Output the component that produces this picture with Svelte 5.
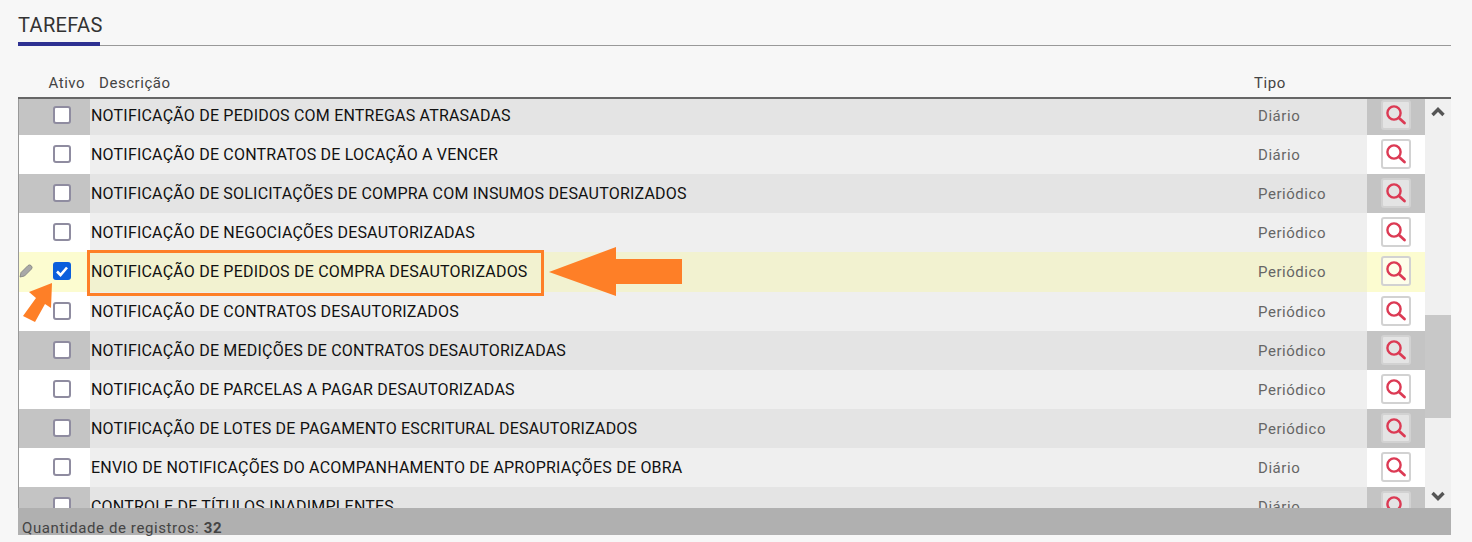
<script>
	const rows = [
		['NOTIFICAÇÃO DE PEDIDOS COM ENTREGAS ATRASADAS', 'Diário', false],
		['NOTIFICAÇÃO DE CONTRATOS DE LOCAÇÃO A VENCER', 'Diário', false],
		['NOTIFICAÇÃO DE SOLICITAÇÕES DE COMPRA COM INSUMOS DESAUTORIZADOS', 'Periódico', false],
		['NOTIFICAÇÃO DE NEGOCIAÇÕES DESAUTORIZADAS', 'Periódico', false],
		['NOTIFICAÇÃO DE PEDIDOS DE COMPRA DESAUTORIZADOS', 'Periódico', true],
		['NOTIFICAÇÃO DE CONTRATOS DESAUTORIZADOS', 'Periódico', false],
		['NOTIFICAÇÃO DE MEDIÇÕES DE CONTRATOS DESAUTORIZADAS', 'Periódico', false],
		['NOTIFICAÇÃO DE PARCELAS A PAGAR DESAUTORIZADAS', 'Periódico', false],
		['NOTIFICAÇÃO DE LOTES DE PAGAMENTO ESCRITURAL DESAUTORIZADOS', 'Periódico', false],
		['ENVIO DE NOTIFICAÇÕES DO ACOMPANHAMENTO DE APROPRIAÇÕES DE OBRA', 'Diário', false],
		['CONTROLE DE TÍTULOS INADIMPLENTES', 'Diário', false]
	];
</script>

<div class="page">
	<h2 class="title"><span>TAREFAS</span></h2>

	<div class="head">
		<span class="h-ativo">Ativo</span>
		<span class="h-desc">Descrição</span>
		<span class="h-tipo">Tipo</span>
	</div>

	<div class="grid">
		<div class="viewport">
			<div class="list">
				{#each rows as [desc, tipo, checked], i}
					<div class="row" class:alt={i % 2 === 0} class:sel={checked}>
						<div class="c-check">
							{#if checked}
								<svg class="pencil" viewBox="0 0 14 14" width="14" height="14">
									<path d="M1 13 L2 8.5 L9 1.5 Q10.5 .3 12 1.5 L12.5 2 Q13.7 3.5 12.5 5 L5.5 12 Z" fill="#a8a8a8" stroke="#7c7c7c" stroke-width=".8"/>
								</svg>
							{/if}
							<span class="box" class:on={checked}>
								{#if checked}
									<svg viewBox="0 0 18 18" width="18" height="18">
										<path d="M4 9.5 L7.5 13 L14 5.5" fill="none" stroke="#fff" stroke-width="2.6"/>
									</svg>
								{/if}
							</span>
						</div>
						<div class="c-desc">{desc}</div>
						<div class="c-tipo">{tipo}</div>
						<div class="c-act">
							<span class="btn">
								<svg viewBox="0 0 24 24" width="24" height="24">
									<circle cx="10" cy="10" r="6.6" fill="none" stroke="#dc3a54" stroke-width="2.4"/>
									<path d="M15 15 L20.5 20" stroke="#dc3a54" stroke-width="2.8" stroke-linecap="round"/>
								</svg>
							</span>
						</div>
					</div>
				{/each}
			</div>
			<div class="scroll">
				<svg class="chev up" viewBox="0 0 14 10" width="14" height="10"><path d="M1.5 8 L7 2.5 L12.5 8" fill="none" stroke="#555" stroke-width="3.4"/></svg>
				<div class="thumb"></div>
				<svg class="chev down" viewBox="0 0 14 10" width="14" height="10"><path d="M1.5 2 L7 7.5 L12.5 2" fill="none" stroke="#555" stroke-width="3.4"/></svg>
			</div>
		</div>
		<div class="foot">Quantidade de registros: <b>32</b></div>
	</div>

	<div class="mark"></div>
	<svg class="arrows" width="1472" height="542" viewBox="0 0 1472 542">
		<polygon points="549,272 616,247 616,259 682,259 682,284 616,284 616,296" fill="#fe7f27"/>
		<polygon points="52,283 29,292 36,298 23,316 35,322 45,304 51,308" fill="#fe7f27"/>
	</svg>
</div>

<style>
	:global(body) {
		background: #f7f7f7;
	}

	.page {
		position: relative;
		width: 1472px;
		height: 542px;
		overflow: hidden;
		box-sizing: border-box;
		padding: 0 21px 0 18px;
		font-family: Roboto, sans-serif;
		color: #222;
	}

	.title {
		margin: 0;
		height: 46px;
		border-bottom: 1px solid #999;
		box-sizing: border-box;
		font-size: 20px;
		font-weight: 400;
		line-height: 21px;
		padding-top: 15px;
		color: #333;
		letter-spacing: .35px;
	}

	.title span {
		display: block;
		width: 82px;
		height: 31px;
		box-sizing: border-box;
		border-bottom: 4px solid #2e3192;
		white-space: nowrap;
	}

	.head {
		display: grid;
		grid-template-columns: 81px 1155px 1fr;
		height: 51px;
		padding-top: 28px;
		box-sizing: border-box;
		font-size: 15px;
		line-height: 18px;
		letter-spacing: .55px;
		color: #444;
	}

	.h-ativo {
		padding-left: 30.5px;
		white-space: nowrap;
	}

	.grid {
		border-top: 2px solid #666;
	}

	.viewport {
		display: flex;
		height: 409px;
		overflow: hidden;
		border-left: 1px solid #999;
	}

	.list {
		flex: 1;
		margin-top: -3px;
	}

	.row {
		display: grid;
		grid-template-columns: 71px 1fr 113px 58px;
		height: 39px;
		background: #fff;
	}

	.row .c-desc,
	.row .c-tipo {
		background: #efefef;
	}

	.row.alt {
		background: #c4c4c4;
	}

	.row.alt .c-desc,
	.row.alt .c-tipo {
		background: #e4e4e4;
	}

	.row.sel {
		height: 40px;
		background: #fcfcd0;
	}

	.row.sel .c-desc,
	.row.sel .c-tipo {
		background: #f2f2d0;
	}

	.row.sel .c-desc {
		padding-bottom: 1px;
		box-sizing: border-box;
	}

	.c-check {
		position: relative;
		display: flex;
		align-items: center;
		justify-content: center;
		padding: 0 0 2px 14px;
		box-sizing: border-box;
	}

	.pencil {
		position: absolute;
		left: 0;
		top: 12px;
	}

	.box {
		width: 18px;
		height: 18px;
		box-sizing: border-box;
		border: 2px solid #8f8ca0;
		border-radius: 3px;
		background: #fff;
		display: block;
	}

	.box.on {
		border: none;
		background: #0b5fdc;
	}

	.box svg {
		display: block;
	}

	.c-desc {
		display: flex;
		align-items: center;
		font-size: 16px;
		letter-spacing: .2px;
		color: #111;
		padding-left: 1px;
		white-space: nowrap;
	}

	.c-tipo {
		display: flex;
		align-items: center;
		font-size: 15px;
		letter-spacing: .55px;
		color: #666;
		padding-left: 4px;
	}

	.c-act {
		display: flex;
		align-items: center;
		justify-content: center;
		padding-bottom: 2px;
		box-sizing: border-box;
	}

	.btn {
		width: 30px;
		height: 30px;
		box-sizing: border-box;
		border: 2px solid #d2d2d2;
		border-radius: 3px;
		background: rgba(255, 255, 255, .55);
		display: flex;
		align-items: center;
		justify-content: center;
	}

	.scroll {
		position: relative;
		width: 26px;
		background: #f0f0f0;
	}

	.thumb {
		position: absolute;
		top: 216px;
		left: 0;
		right: 0;
		height: 103px;
		background: #c8c8c8;
	}

	.chev {
		position: absolute;
		left: 6px;
	}

	.up {
		top: 8px;
	}

	.down {
		bottom: 7px;
	}

	.foot {
		height: 27px;
		background: #b0b0b0;
		box-sizing: border-box;
		padding: 11px 0 0 4px;
		font-size: 15px;
		line-height: 18px;
		letter-spacing: .6px;
		color: #444;
	}

	.mark {
		position: absolute;
		left: 87px;
		top: 250px;
		width: 457px;
		height: 46px;
		box-sizing: border-box;
		border: 3px solid #fe7f27;
	}

	.arrows {
		position: absolute;
		left: 0;
		top: 0;
		pointer-events: none;
	}
</style>
